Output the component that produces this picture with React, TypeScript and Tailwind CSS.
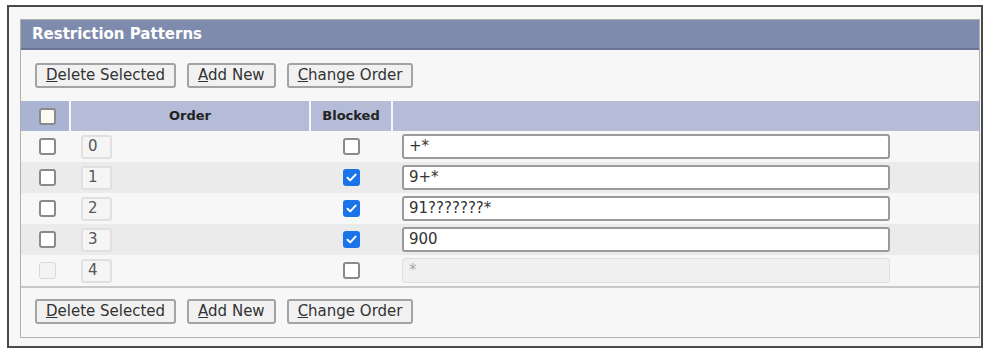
import React from "react";

const Btn = ({ u, rest }: { u: string; rest: string }) => (
  <button className="h-[25px] px-[9px] bg-[#f1f1f1] border-2 border-[#a3a3a3] rounded-[3px] text-[15px] text-[#333] leading-none">
    <span className="underline">{u}</span>
    {rest}
  </button>
);

const Toolbar = () => (
  <div className="flex gap-[11px] items-center">
    <Btn u="D" rest="elete Selected" />
    <Btn u="A" rest="dd New" />
    <Btn u="C" rest="hange Order" />
  </div>
);

const Box = ({ checked, disabled }: { checked?: boolean; disabled?: boolean }) =>
  checked ? (
    <div className="w-[17px] h-[17px] rounded-[3px] bg-[#1a73e8] flex items-center justify-center">
      <svg width="13" height="13" viewBox="0 0 13 13">
        <path d="M2.5 6.8 L5.2 9.4 L10.6 3.6" stroke="white" strokeWidth="2" fill="none" strokeLinecap="round" strokeLinejoin="round" />
      </svg>
    </div>
  ) : (
    <div
      className={
        disabled
          ? "w-[17px] h-[17px] rounded-[3px] border border-[#d8d8d8] bg-[#f3f3f3]"
          : "w-[17px] h-[17px] rounded-[3px] border-2 border-[#8a8a8a] bg-white"
      }
    />
  );

const rows = [
  { n: "0", blocked: false, pat: "+*" },
  { n: "1", blocked: true, pat: "9+*" },
  { n: "2", blocked: true, pat: "91???????*" },
  { n: "3", blocked: true, pat: "900" },
  { n: "4", blocked: false, pat: "*", disabled: true },
];

export default function App() {
  return (
    <div className="w-[990px] h-[357px] bg-white pt-[5px] pl-[7px] font-['DejaVu_Sans',sans-serif]">
      <div className="w-[976px] h-[343px] border-2 border-[#4a4a4a] bg-[#f7f7f7] pt-[12px] pl-[11px]">
        <div className="w-[960px] h-[319px] border border-[#b0b0b0] bg-[#f7f7f7] flex flex-col">
          <div className="h-[30px] bg-[#7f8bac] border-b-2 border-[#6a7596] flex items-center pl-[11px] text-white font-bold text-[15px]">
            Restriction Patterns
          </div>
          <div className="h-[51px] flex items-center pl-[14px]">
            <Toolbar />
          </div>
          <div className="grid grid-cols-[48px_238px_80px_1fr] gap-x-[2px] h-[30px] bg-[#f7f7f7] text-[13px] font-bold text-[#222]">
            <div className="bg-[#aab3d2] flex items-center justify-center pl-[4px]">
              <div className="w-[17px] h-[17px] rounded-[3px] border-2 border-[#8a8a8a] bg-[#fbfbf3]" />
            </div>
            <div className="bg-[#b4bcd8] flex items-center justify-center">Order</div>
            <div className="bg-[#b4bcd8] flex items-center justify-center">Blocked</div>
            <div className="bg-[#b4bcd8]" />
          </div>
          {rows.map((r, i) => (
            <div
              key={r.n}
              className={
                "grid grid-cols-[49px_240px_82px_1fr] h-[31px] items-center text-[15px] " +
                (i % 2 === 1 ? "bg-[#ebebeb]" : "bg-[#f7f7f7]")
              }
            >
              <div className="flex justify-center pl-[4px]">
                <Box disabled={r.disabled} />
              </div>
              <div className="pl-[11px]">
                <div className="w-[31px] h-[24px] border-2 border-[#e0e0e0] rounded-[3px] bg-[#f5f5f5] flex items-center pl-[5px] text-[#555]">
                  {r.n}
                </div>
              </div>
              <div className="flex justify-center">
                <Box checked={r.blocked} />
              </div>
              <div className="pl-[10px]">
                <div
                  className={
                    r.disabled
                      ? "w-[488px] h-[25px] border border-[#dedede] rounded-[3px] bg-[#f0f0f0] flex items-center pl-[6px] text-[#aaa]"
                      : "w-[488px] h-[25px] border-2 border-[#9a9a9a] rounded-[3px] bg-white flex items-center pl-[5px] text-[#333]"
                  }
                >
                  {r.pat}
                </div>
              </div>
            </div>
          ))}
          <div className="h-[2px] bg-[#c8c8c8]" />
          <div className="flex-1 flex items-center pl-[14px] pb-[2px]">
            <Toolbar />
          </div>
        </div>
      </div>
    </div>
  );
}
